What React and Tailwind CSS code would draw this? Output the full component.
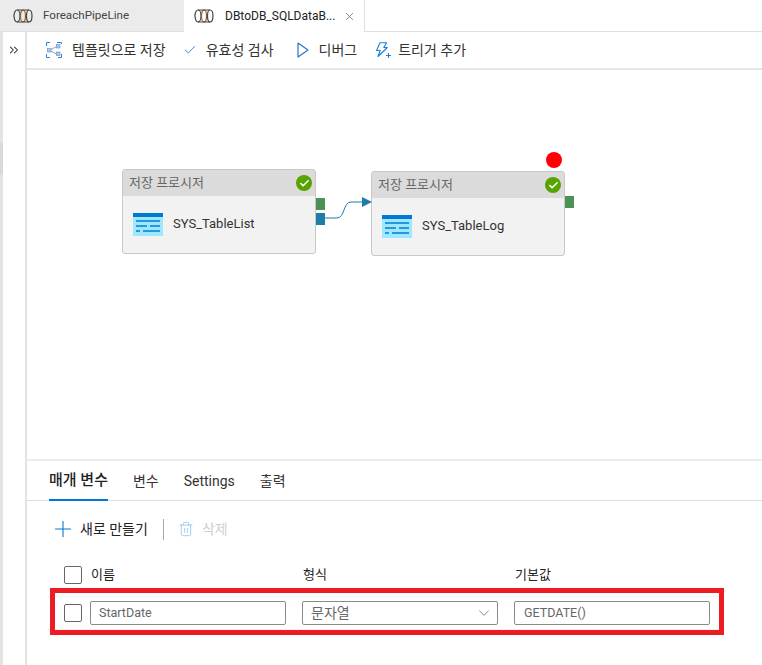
import { Check, ChevronDown, ChevronsRight, Plus, Trash2, X } from "lucide-react";

const FONT = "font-['Roboto','Noto_Sans_CJK_KR',sans-serif]";

const PipelineIcon = () => (
  <svg width="20" height="14" viewBox="0 0 20 14" fill="none" stroke="#444" strokeWidth="1.2">
    <ellipse cx="4" cy="7" rx="3" ry="6" />
    <ellipse cx="10" cy="7" rx="2.5" ry="6" stroke="#8a6a2a" />
    <path d="M4 1h12c2 0 3 2.500 3 6s-1 6-3 6H4" />
    <path d="M16 1c-1.500 0-2.500 2.500-2.500 6s1 6 2.500 6" />
  </svg>
);

const TemplateIcon = () => (
  <svg width="16" height="16" viewBox="0 0 16 16" fill="none">
    <path d="M.5 4V.5H4M11 .5h4.500V2M.5 12v3.500H4M12 15.500h3.500V12" stroke="#2f7fd6" />
    <rect x="1.500" y="6.500" width="3.500" height="3.500" fill="#a9c9ee" stroke="#5c93d3" strokeWidth=".6" />
    <rect x="10.500" y="2.500" width="3.500" height="3.500" fill="#a9c9ee" stroke="#5c93d3" strokeWidth=".6" />
    <rect x="10.500" y="10" width="3.500" height="3.500" fill="#a9c9ee" stroke="#5c93d3" strokeWidth=".6" />
    <path d="M5 7.500l5.500-3M5 9l5.500 3" stroke="#777" strokeWidth=".7" />
  </svg>
);

const PlayIcon = () => (
  <svg width="12" height="16" viewBox="0 0 12 16" fill="none">
    <path d="M1 1l10 7-10 7z" stroke="#2a74c4" strokeWidth="1.2" strokeLinejoin="round" />
  </svg>
);

const TriggerIcon = () => (
  <svg width="17" height="17" viewBox="0 0 17 17" fill="none" stroke="#1a7fd6" strokeWidth="1.1">
    <path d="M5 .8h6.500L8.800 5.500h3.500L3 14.500 5.200 8.500H1.600z" strokeLinejoin="round" />
    <path d="M13.500 11v5M11 13.500h5" />
  </svg>
);

const TableIcon = () => (
  <svg width="30" height="23" viewBox="0 0 30 23" className="shrink-0">
    <rect y="0" width="30" height="23" fill="#9be8ff" />
    <rect y="0" width="30" height="4" fill="#0078d4" />
    <path d="M3 8h24M3 13h11M17 13h10M3 18h4M10 18h17" stroke="#0a78d6" strokeWidth="1.4" />
  </svg>
);

const StatusBadge = () => (
  <span className="flex h-4 w-4 items-center justify-center rounded-full bg-[#57a300]">
    <Check size={11} strokeWidth={3.5} color="white" />
  </span>
);

function ActivityNode({ name, className }) {
  return (
    <div className={`absolute h-[85px] w-[194px] rounded-[3px] border border-[#c8c8c8] bg-[#f2f2f2] ${className}`}>
      <div className="flex h-[26px] items-center justify-between bg-[#dbdbdb] pl-1.5 pr-[3px] text-[13px] text-[#666]">
        <span>저장 프로시저</span>
        <StatusBadge />
      </div>
      <div className="flex h-[56px] items-center gap-[10px] pl-[10px] text-[13px] text-[#333]">
        <TableIcon />
        <span>{name}</span>
      </div>
    </div>
  );
}

function Checkbox() {
  return <span className="block h-[18px] w-[18px] rounded-[2px] border border-[#666] bg-white" />;
}

export default function App() {
  return (
    <div className={`relative h-[665px] w-[762px] overflow-hidden bg-white ${FONT}`}>
      {/* tab bar */}
      <div className="flex h-8 border-b border-[#e0e0e0]">
        <div className="flex w-[184px] items-center gap-[10px] bg-[#ebebeb] pl-[13px] text-[11.6px] text-[#444]">
          <PipelineIcon />
          <span>ForeachPipeLine</span>
        </div>
        <div className="-mb-px flex w-[181px] items-center border-r border-[#e0e0e0] bg-white pl-[10px] text-[12px] text-[#222]">
          <PipelineIcon />
          <span className="ml-[11px]">DBtoDB_SQLDataB...</span>
          <X size={13} strokeWidth={1.2} color="#555" className="ml-2" />
        </div>
      </div>

      <div className="flex h-[633px]">
        {/* collapsed rail */}
        <div className="flex w-[27px] shrink-0 justify-center border-r-2 border-l-[3px] border-[#e3e3e3] bg-white pt-[11px]">
          <ChevronsRight size={14} color="#333" strokeWidth={1.8} />
        </div>

        <div className="flex min-w-0 flex-1 flex-col">
          {/* toolbar */}
          <div className="flex h-[38px] shrink-0 items-center border-b-2 border-[#e6e6e6] pl-[19px] text-[14px] text-[#333]">
            <TemplateIcon />
            <span className="ml-[10px]">템플릿으로 저장</span>
            <Check size={14} strokeWidth={1.5} color="#2a74c4" className="ml-[17px]" />
            <span className="ml-[9px]">유효성 검사</span>
            <span className="ml-[23px] flex"><PlayIcon /></span>
            <span className="ml-[10px]">디버그</span>
            <span className="ml-[18px] flex"><TriggerIcon /></span>
            <span className="ml-[6px]">트리거 추가</span>
          </div>

          {/* canvas */}
          <div className="relative h-[391px] shrink-0 border-b-2 border-[#ececec]">
            <ActivityNode name="SYS_TableList" className="left-[95px] top-[99px]" />
            <ActivityNode name="SYS_TableLog" className="left-[344px] top-[101px]" />
            <span className="absolute left-[519px] top-[82px] h-4 w-4 rounded-full bg-[#ff0000]" />
            <span className="absolute left-[289px] top-[128px] h-[12px] w-[9px] bg-[#4c9155]" />
            <span className="absolute left-[289px] top-[143px] h-[12px] w-[9px] bg-[#1d7da6]" />
            <span className="absolute left-[538px] top-[126px] h-[12px] w-[9px] bg-[#4c9155]" />
            <svg className="absolute left-[298px] top-[125px]" width="48" height="28" viewBox="0 0 48 28" fill="none">
              <path d="M0 23h12c8 0 6-16 14-16h11" stroke="#1d7da6" strokeWidth="1" />
              <path d="M37 2l10 5-10 5z" fill="#1d7da6" />
            </svg>
          </div>

          {/* bottom panel tabs */}
          <div className="flex h-[40px] shrink-0 items-stretch gap-[25px] border-b border-[#e0e0e0] pl-[22px] text-[14px] text-[#333]">
            <span className="-mb-px flex items-center border-b-2 border-[#0078d4] text-[15px] font-medium text-[#222]">매개 변수</span>
            <span className="flex items-center pt-px">변수</span>
            <span className="flex items-center pt-px">Settings</span>
            <span className="flex items-center pt-px">출력</span>
          </div>

          {/* commands */}
          <div className="mt-[16px] flex h-[24px] shrink-0 items-center pl-[23px] text-[14px] text-[#222]">
            <Plus size={26} strokeWidth={1} color="#0078d4" />
            <span className="ml-[4px]">새로 만들기</span>
            <span className="ml-[15px] h-[21px] w-px bg-[#aaa]" />
            <Trash2 size={16} strokeWidth={1.2} color="#8fc1e6" className="ml-[14px]" />
            <span className="ml-[8px] text-[#d0d0d0]">삭제</span>
          </div>

          {/* parameter table */}
          <div className="mt-[24px] flex h-[20px] shrink-0 items-center text-[13px] text-[#222]">
            <div className="ml-[37px] w-[27px]"><Checkbox /></div>
            <span className="w-[212px]">이름</span>
            <span className="w-[212px]">형식</span>
            <span>기본값</span>
          </div>
          <div className="ml-[21px] mt-[11px] flex h-[34px] w-[676px] shrink-0 items-center border-y border-[#f2f2f2] text-[12.5px] text-[#666]">
            <div className="ml-[16px] w-[26px]"><Checkbox /></div>
            <div className="flex h-6 w-[196px] items-center rounded-[2px] border border-[#8a8a8a] pl-2">StartDate</div>
            <div className="ml-[16px] flex h-6 w-[196px] items-center justify-between rounded-[2px] border border-[#8a8a8a] pl-2 pr-[4px] text-[14px]">
              <span>문자열</span>
              <ChevronDown size={18} strokeWidth={1} color="#666" />
            </div>
            <div className="ml-[16px] flex h-6 w-[196px] items-center rounded-[2px] border border-[#8a8a8a] pl-[9px]">GETDATE()</div>
          </div>
        </div>
      </div>

      {/* left edge sliver next to the rail */}
      <span className="absolute left-0 top-[143px] h-[32px] w-[3px] bg-[#d9d9d9]" />

      {/* red annotation box over the row */}
      <div className="absolute left-[50px] top-[588px] h-[47px] w-[674px] border-[5px] border-[#ed1c24]" />
    </div>
  );
}
